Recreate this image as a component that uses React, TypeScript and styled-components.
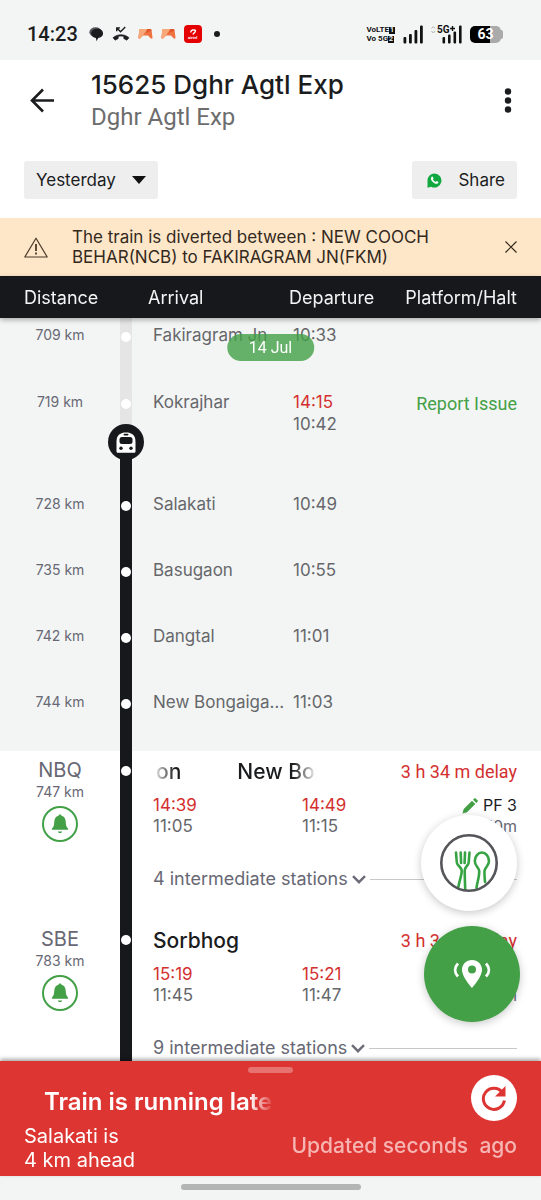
import React from "react";
import styled, { createGlobalStyle } from "styled-components";

const color = {
  ink: "#1b1c1e",
  black: "#17181c",
  surface: "#f3f5f4",
  text: "#66676b",
  slate: "#676874",
  red: "#d32f2f",
  panel: "#dd3532",
  green: "#43a047",
};

const sans = `Inter, Roboto, sans-serif`;
const roboto = `Roboto, "Liberation Sans", sans-serif`;

const GlobalStyle = createGlobalStyle`
  *, *::before, *::after { box-sizing: border-box; }
  body { margin: 0; background: #fff; font-family: ${sans}; color: ${color.ink}; }
  button, select { font: inherit; color: inherit; border: 0; background: none; padding: 0; margin: 0; cursor: pointer; }
  h1, h2, p, ul { margin: 0; padding: 0; font-weight: inherit; list-style: none; }
  svg { display: block; flex: none; }
`;

const Screen = styled.div`
  display: flex;
  flex-direction: column;
  height: 100vh;
  overflow: hidden;
`;

/* ---------- status bar ---------- */

const StatusBar = styled.div`
  display: flex;
  justify-content: space-between;
  align-items: center;
  flex: none;
  height: 60px;
  padding: 8px 38px 0 27px;
  background: ${color.surface};
`;

const StatusGroup = styled.div`
  display: flex;
  align-items: center;
  gap: 8px;
`;

const Clock = styled.time`
  font: 500 20px/24px ${roboto};
  margin-right: 3px;
`;

const Volte = styled.div`
  font: 700 8px/9px ${roboto};
  white-space: nowrap;
  color: #111;
`;

const SimTag = styled.span`
  display: inline-block;
  background: #111;
  color: ${color.surface};
  font-size: 7px;
  line-height: 7px;
  padding: 0 1px;
`;

const AirtelBadge = styled.div`
  display: flex;
  flex-direction: column;
  align-items: center;
  justify-content: center;
  width: 18px;
  height: 18px;
  border-radius: 4px;
  background: #e40000;
  color: #fff;
  font: 700 4px/5px ${roboto};
`;

const Battery = styled.div`
  display: flex;
  align-items: center;
`;

const BatteryBody = styled.div`
  width: 31px;
  height: 17px;
  border-radius: 5px;
  background: linear-gradient(90deg, #000 66%, #aaaaaa 66%);
  color: #fff;
  text-align: center;
  font: 700 14px/17px ${roboto};
`;

const BatteryTip = styled.div`
  width: 2px;
  height: 9px;
  border-radius: 0 2px 2px 0;
  background: #aaaaaa;
`;

/* ---------- header ---------- */

const Header = styled.header`
  display: flex;
  align-items: center;
  flex: none;
  height: 82px;
  padding: 0 28px 0 28px;
`;

const IconButton = styled.button`
  display: flex;
  align-items: center;
  justify-content: center;
  width: 28px;
  height: 40px;
`;

const MenuButton = styled(IconButton)`
  width: 10px;
`;

const Titles = styled.div`
  flex: 1;
  padding-left: 35px;
`;

const Title = styled.h1`
  font: 500 26px/32px ${sans};
`;

const Subtitle = styled.p`
  font: 400 24px/32px ${roboto};
  color: #6d6d6d;
`;

/* ---------- toolbar ---------- */

const Toolbar = styled.div`
  display: flex;
  justify-content: space-between;
  flex: none;
  padding: 19px 24px;
`;

const DayPicker = styled.label`
  display: grid;
  align-items: center;
  background: #eeeeee;
  border-radius: 3px;
  > * { grid-area: 1 / 1; }
  > svg { justify-self: end; margin-right: 12px; pointer-events: none; }
`;

const DaySelect = styled.select`
  appearance: none;
  width: 134px;
  height: 38px;
  padding: 0 12px;
  font-size: 17px;
`;

const ShareButton = styled.button`
  display: flex;
  align-items: center;
  justify-content: space-between;
  width: 105px;
  height: 38px;
  padding: 0 12px 0 15px;
  border-radius: 3px;
  background: #eeeeee;
  font-size: 17px;
`;

/* ---------- alert ---------- */

const Alert = styled.div`
  display: flex;
  align-items: center;
  flex: none;
  padding: 9px 24px;
  background: #fee7c9;
  font-size: 17px;
  line-height: 20px;
  color: #33291c;
  p { flex: 1; padding: 0 24px 0 24px; max-width: 430px; }
  button { margin-left: auto; }
`;

/* ---------- column heads ---------- */

const ColumnHeads = styled.div`
  position: relative;
  z-index: 2;
  display: grid;
  grid-template-columns: 124px 141px 1fr auto;
  flex: none;
  padding: 2px 24px 0;
  background: ${color.black};
  color: #f4f4f4;
  font-size: 18px;
  line-height: 40px;
  box-shadow: 0 2px 5px rgba(0, 0, 0, 0.3);
`;

/* ---------- stops ---------- */

const ListArea = styled.main`
  position: relative;
  flex: 1;
  min-height: 0;
`;

const Scroller = styled.div`
  height: 100%;
  overflow-y: auto;
  scrollbar-width: none;
`;

const PassedList = styled.ul`
  background: ${color.surface};
`;

const StopRow = styled.li<{ $height: number; $top: number }>`
  display: grid;
  grid-template-columns: 120px 12px 161px 1fr auto;
  height: ${(p) => p.$height}px;
  padding-right: 24px;
  font-size: 17px;
  line-height: 22px;
  color: ${color.text};
  > :not([data-track]) { padding-top: ${(p) => p.$top}px; }
`;

const Distance = styled.span`
  text-align: center;
  font-size: 14px;
  color: ${color.slate};
`;

const StopName = styled.span`
  padding-left: 21px;
  padding-right: 6px;
  white-space: nowrap;
  overflow: hidden;
  text-overflow: ellipsis;
  min-width: 0;
`;

const StopTimes = styled.span`
  display: flex;
  flex-direction: column;
`;

const Actual = styled.span`
  color: ${color.red};
`;

const ReportLink = styled.a`
  font: 400 18px/26px ${roboto};
  color: ${color.green};
  text-decoration: none;
`;

const Track = styled.div<{ $done?: boolean; $dot: number }>`
  position: relative;
  padding-top: ${(p) => p.$dot}px;
  background: ${(p) => (p.$done ? "#e5e5e5" : color.black)};
`;

const Dot = styled.div`
  width: 10px;
  height: 10px;
  margin: 0 auto;
  border-radius: 50%;
  background: #fff;
`;

const TrainMarker = styled.div`
  position: absolute;
  left: 50%;
  bottom: 0;
  width: 12px;
  height: 20px;
  background: ${color.black};
  transform: translateX(-50%);
  svg {
    position: absolute;
    left: -12px;
    bottom: 10px;
  }
`;

const DatePill = styled.div`
  position: absolute;
  top: 16px;
  left: 50%;
  transform: translateX(-50%);
  padding: 0 22px;
  border-radius: 14px;
  background: ${color.green};
  opacity: 0.8;
  color: #fff;
  font: 400 16px/27px ${roboto};
`;

const StationRow = styled.li`
  display: grid;
  grid-template-columns: 120px 12px 1fr;
  min-height: 169px;
  background: #fff;
`;

const StationCode = styled.div`
  display: flex;
  flex-direction: column;
  align-items: center;
  padding-top: 8px;
  font-size: 20px;
  line-height: 22px;
  color: ${color.slate};
`;

const BellButton = styled.button`
  display: flex;
  align-items: center;
  justify-content: center;
  width: 36px;
  height: 36px;
  margin-top: 3px;
  border: 2px solid ${color.green};
  border-radius: 50%;
`;

const StationBody = styled.div`
  padding: 8px 24px 0 21px;
  min-width: 0;
`;

const StationHead = styled.div`
  display: flex;
  justify-content: space-between;
  line-height: 26px;
`;

const StationName = styled.h2<{ $scrolling?: boolean }>`
  display: flex;
  gap: 56px;
  width: 164px;
  overflow: hidden;
  white-space: nowrap;
  font-size: 21px;
  font-weight: 500;
  ${(p) =>
    p.$scrolling &&
    `padding-left: 3px;
     mask-image: linear-gradient(90deg, transparent, #000 22px, #000 calc(100% - 24px), transparent);`}
`;

const Delay = styled.span`
  font: 400 18px/26px ${roboto};
  color: ${color.red};
`;

const TimeGrid = styled.div`
  display: grid;
  grid-template-columns: 149px 1fr auto;
  padding-top: 10px;
  font-size: 17px;
  line-height: 21px;
  color: ${color.text};
`;

const Platform = styled.span`
  display: flex;
  align-items: center;
  gap: 5px;
  font-size: 16px;
  color: ${color.ink};
`;

const Halt = styled.span`
  text-align: right;
  font-size: 16px;
  color: ${color.slate};
`;

const Intermediate = styled.button`
  display: flex;
  align-items: center;
  gap: 4px;
  width: 100%;
  margin-top: 31px;
  font-size: 18px;
  line-height: 22px;
  white-space: nowrap;
  color: ${color.slate};
  &::after {
    content: "";
    flex: 1;
    height: 1px;
    background: #c8c8ca;
  }
`;

/* ---------- floating buttons ---------- */

const FloatingActions = styled.div`
  position: absolute;
  right: 21px;
  bottom: 39px;
  display: flex;
  flex-direction: column;
  gap: 15px;
`;

const Fab = styled.button<{ $fill: string; $shift?: number }>`
  display: flex;
  align-items: center;
  justify-content: center;
  width: 96px;
  height: 96px;
  margin-left: -${(p) => p.$shift ?? 0}px;
  border-radius: 50%;
  background: ${(p) => p.$fill};
  box-shadow: 0 2px 8px rgba(0, 0, 0, 0.22);
`;

/* ---------- bottom panel ---------- */

const Panel = styled.section`
  position: relative;
  z-index: 2;
  flex: none;
  padding: 6px 24px 4px;
  background: ${color.panel};
  color: #fff;
  box-shadow: 0 -2px 4px rgba(0, 0, 0, 0.35);
`;

const Handle = styled.div`
  width: 45px;
  height: 6px;
  margin: 0 auto;
  border-radius: 3px;
  background: #e87270;
`;

const PanelBody = styled.div`
  display: flex;
  justify-content: space-between;
`;

const RunningText = styled.h2`
  width: 250px;
  margin-top: 13px;
  padding-left: 20px;
  overflow: hidden;
  white-space: nowrap;
  font-size: 24px;
  font-weight: 600;
  line-height: 32px;
  mask-image: linear-gradient(90deg, #000 calc(100% - 24px), transparent);
`;

const Ahead = styled.p`
  margin-top: 6px;
  font-size: 20px;
  line-height: 24px;
`;

const PanelSide = styled.div`
  display: flex;
  flex-direction: column;
  align-items: flex-end;
  padding-top: 2px;
`;

const RefreshButton = styled.button`
  display: flex;
  align-items: center;
  justify-content: center;
  width: 46px;
  height: 46px;
  border-radius: 50%;
  background: #fff;
`;

const Updated = styled.p`
  margin-top: 12px;
  font-size: 21px;
  font-weight: 500;
  line-height: 26px;
  white-space: pre;
  color: #f6b5b3;
`;

const NavBar = styled.div`
  display: flex;
  justify-content: center;
  flex: none;
  height: 24px;
  padding-top: 8px;
  background: ${color.surface};
  &::after {
    content: "";
    width: 180px;
    height: 6px;
    border-radius: 3px;
    background: #b3b5b4;
  }
`;

/* ---------- icons ---------- */

const ChatIcon = () => (
  <svg width="15" height="16" viewBox="0 0 16 16">
    <ellipse cx="7" cy="6" rx="6.6" ry="5.2" fill="#55575a" />
    <path d="M9 2.4c3.4 0 6 2 6 5 0 2.600-2.200 4.500-5.200 4.900L8 15.600 7.400 12.200C4.500 11.700 2.300 9.900 2.300 7.400c0-3 3-5 6.700-5z" fill="#1b1c1e" />
  </svg>
);

const MissedCallIcon = () => (
  <svg width="18" height="16" viewBox="0 0 19 16" fill="none" stroke="#1b1c1e">
    <path d="M5 1.500l4 4 5-5M5 5V1.500h3.500" strokeWidth="1.500" />
    <path d="M1 12C5.500 7.600 13.500 7.600 18 12l-2.400 2.600-3.200-1.800v-2.200c-1.900-.5-3.900-.5-5.800 0v2.200l-3.200 1.800z" fill="#1b1c1e" strokeWidth="0.600" />
  </svg>
);

const GameIcon = () => (
  <svg width="15" height="12" viewBox="0 0 15 12">
    <path d="M2.500 1h9.500c1 0 1.400.6 1.600 1.600l.9 7c.1 1.300-1.200 1.500-2 .7L10 7.600H5L2.400 10.300c-.8.8-2.100.6-2-.7l.9-7C1.500 1.600 1.500 1 2.500 1z" fill="#ee7340" />
    <path d="M2.500 1h6.800L5 7.600 2.400 10.300c-.8.8-2.100.6-2-.7l.9-7C1.500 1.600 1.500 1 2.500 1z" fill="#f8a878" />
    <path d="M9.300 1H12c1 0 1.400.6 1.600 1.600L8 5z" fill="#e2562c" />
  </svg>
);

const SignalIcon = () => (
  <svg width="20" height="19" viewBox="0 0 20 19" fill="#111">
    <rect x="0.500" y="12" width="2.800" height="6.500" rx="1" />
    <rect x="6" y="9" width="2.800" height="9.500" rx="1" />
    <rect x="11.500" y="5" width="2.800" height="13.500" rx="1" />
    <rect x="17" y="0.500" width="2.800" height="18" rx="1" />
  </svg>
);

const FiveGIcon = () => (
  <svg width="31" height="19" viewBox="0 0 31 19" fill="#111">
    <path d="M0.500 3.500l1.800-2 1.800 2M0.500 6l1.800 2 1.800-2" fill="none" stroke="#b0b2b1" />
    <text x="6" y="8" fontFamily="Roboto, sans-serif" fontWeight="700" fontSize="10">5G</text>
    <path d="M19 3.500h5M21.500 1v5" stroke="#111" strokeWidth="1.400" />
    <rect x="11.500" y="12" width="2.600" height="6.500" rx="1" />
    <rect x="17" y="9.500" width="2.600" height="9" rx="1" />
    <rect x="22.500" y="6.500" width="2.600" height="12" rx="1" />
    <rect x="28" y="0.500" width="2.600" height="18" rx="1" />
  </svg>
);

const BackIcon = () => (
  <svg width="28" height="28" viewBox="0 0 28 28" fill="none" stroke="#1b1c1e" strokeWidth="2.600">
    <path d="M26 13.500H4M15 2.500L4 13.500l11 11" />
  </svg>
);

const DotsIcon = () => (
  <svg width="8" height="26" viewBox="0 0 8 26" fill="#1b1c1e">
    <circle cx="4" cy="3.500" r="3.200" />
    <circle cx="4" cy="12.500" r="3.200" />
    <circle cx="4" cy="21.500" r="3.200" />
  </svg>
);

const CaretIcon = () => (
  <svg width="14" height="8" viewBox="0 0 14 8" fill="#111">
    <path d="M0 0h14L7 8z" />
  </svg>
);

const WhatsappIcon = () => (
  <svg width="15" height="15" viewBox="0 0 15 15">
    <path d="M7.500.5a7 7 0 1 1-3.300 13.200L.5 14.700V7.500A7 7 0 0 1 7.500.5z" fill="#10a83f" />
    <path d="M4.600 3.800c.5-.6 1-.5 1.300.1l.6 1.300c.1.500-.5.800-.5 1.200.5 1 1.400 1.900 2.500 2.300.5 0 .8-.9 1.200-.8l1.500.8c.5.300.1 1.700-.9 2C7.600 11.500 3.200 7.300 4 4.900z" fill="#fff" />
  </svg>
);

const WarningIcon = () => (
  <svg width="24" height="21" viewBox="0 0 24 21" fill="none" stroke="#4a3b26">
    <path d="M12 1.200L23.200 20H.8z" strokeLinejoin="round" strokeWidth="1.200" />
    <path d="M12 7v7M12 15.500v2" strokeWidth="1.800" />
  </svg>
);

const CloseIcon = () => (
  <svg width="12" height="12" viewBox="0 0 12 12" stroke="#33291c" strokeWidth="1.200">
    <path d="M.5.5l11 11M11.500.5l-11 11" />
  </svg>
);

const TrainIcon = () => (
  <svg width="36" height="36" viewBox="0 0 36 36">
    <circle cx="18" cy="18" r="18" fill="#17181c" />
    <path d="M18 8.500c5.500 0 9.500 2.500 9.500 9v9.700c0 1-.6 1.600-1.600 1.600H10.100c-1 0-1.600-.6-1.600-1.600V17.500c0-6.500 4-9 9.500-9z" fill="#fff" />
    <rect x="15.500" y="9.800" width="5" height="1.600" rx="0.800" fill="#17181c" />
    <rect x="11.500" y="13" width="13" height="7" rx="2.500" fill="#17181c" />
    <circle cx="13" cy="24.300" r="1.700" fill="#17181c" />
    <circle cx="23" cy="24.300" r="1.700" fill="#17181c" />
  </svg>
);

const BellIcon = () => (
  <svg width="18" height="20" viewBox="0 0 18 20" fill="#43a047">
    <path d="M9 .5c.8 0 1.400.5 1.500 1.300C13.300 2.500 14.500 4.600 14.700 7.500c.2 3.300.4 5.200 2.300 7 .5.500.3 1.200-.4 1.200H1.400c-.7 0-.9-.7-.4-1.200 1.900-1.800 2.100-3.700 2.300-7C3.500 4.600 4.700 2.500 7.500 1.800 7.600 1 8.200.5 9 .5z" />
    <path d="M6.800 17.500h4.400c-.3 1-1.200 1.500-2.200 1.500s-1.900-.5-2.200-1.500z" />
  </svg>
);

const PencilIcon = () => (
  <svg width="16" height="16" viewBox="0 0 16 16" fill="#43a047">
    <path d="M.5 15.500l1.200-4.500L10 2.700 13.300 6 5 14.300zM11 1.700l1.200-1.200c.5-.5 1.100-.4 1.500 0l1.800 1.800c.4.400.5 1 0 1.500L14.300 5z" />
  </svg>
);

const ChevronIcon = () => (
  <svg width="14" height="9" viewBox="0 0 14 9" fill="none" stroke="#6c6d78" strokeWidth="2.400">
    <path d="M1 1.200l6 6 6-6" />
  </svg>
);

const FoodIcon = () => (
  <svg width="58" height="58" viewBox="0 0 58 58" fill="none">
    <g stroke="#37a443" strokeWidth="2.600" strokeLinecap="round" strokeLinejoin="round">
      <path d="M16 18.500l.8 10c.3 3.200 4.700 4.500 4.900 8 .3 5-2.800 11-3.400 17" />
      <path d="M29.500 18.500l-.8 10c-.3 3.200-4 4.500-4 8 0 5 .3 12 .5 19" />
      <path d="M20.700 18.500l.4 10.500M25 18.500l-.4 10.500" />
      <path d="M36.500 54c.6-6 3-11 2.700-17-.3-3.500-4.400-5-4.400-10 0-4.500 3.200-8.500 7.100-8.500s7.100 4 7.100 8.500c0 5-4.200 6.500-4.500 10-.3 4 .3 7.500.5 11" />
    </g>
    <circle cx="29" cy="29" r="27.700" stroke="#55565a" strokeWidth="2.600" />
  </svg>
);

const LocateIcon = () => (
  <svg width="38" height="30" viewBox="0 0 38 30" fill="none">
    <path d="M19 1C13.300 1 9 5.300 9 10.800 9 18 19 29 19 29s10-11 10-18.200C29 5.300 24.700 1 19 1zm0 13.600a4 4 0 1 1 0-8 4 4 0 0 1 0 8z" fill="#fff" />
    <path d="M5 4.500C1.200 8.500 1.200 13.500 5 17.500M33 4.500c3.800 4 3.800 9 0 13" stroke="#fff" strokeWidth="2.800" />
  </svg>
);

const RefreshIcon = () => (
  <svg width="26" height="26" viewBox="0 0 26 26" fill="none">
    <path d="M21.500 7.500A10.600 10.600 0 1 0 23.400 15.500" stroke="#dd3532" strokeWidth="3" />
    <path d="M24.500 1v10.500H14z" fill="#dd3532" />
  </svg>
);

/* ---------- data ---------- */

type Stop = {
  km: number;
  name: string;
  time: string;
  actual?: string;
  done?: boolean;
  height: number;
  top: number;
  train?: boolean;
};

const stops: Stop[] = [
  { km: 709, name: "Fakiragram Jn", time: "10:33", done: true, height: 50, top: 6 },
  { km: 719, name: "Kokrajhar", time: "10:42", actual: "14:15", done: true, height: 102, top: 23, train: true },
  { km: 728, name: "Salakati", time: "10:49", height: 66, top: 23 },
  { km: 735, name: "Basugaon", time: "10:55", height: 66, top: 23 },
  { km: 742, name: "Dangtal", time: "11:01", height: 66, top: 23 },
  { km: 744, name: "New Bongaigaon Jn", time: "11:03", height: 83, top: 23 },
];

const stations = [
  { code: "NBQ", km: 747, name: ["on", "New Bongaigaon"], arr: "14:39", sArr: "11:05", dep: "14:49", sDep: "11:15", pf: "PF 3", halt: "10m", between: 4 },
  { code: "SBE", km: 783, name: ["Sorbhog"], arr: "15:19", sArr: "11:45", dep: "15:21", sDep: "11:47", pf: "PF 1", halt: "2m", between: 9 },
];

export default function App() {
  return (
    <Screen>
      <GlobalStyle />
      <StatusBar>
        <StatusGroup>
          <Clock>14:23</Clock>
          <ChatIcon />
          <MissedCallIcon />
          <GameIcon />
          <GameIcon />
          <AirtelBadge>
            <svg width="8" height="6" viewBox="0 0 8 6" fill="none" stroke="#fff" strokeWidth="1.400">
              <path d="M2 3.500C1 1 6 0 6.500 1.800 6.800 3.200 4.500 4 4 5.500" />
            </svg>
            airtel
          </AirtelBadge>
          <svg width="12" height="6" viewBox="0 0 12 6">
            <circle cx="7" cy="3" r="3" fill="#1b1c1e" />
          </svg>
        </StatusGroup>
        <StatusGroup>
          <Volte>
            <div>VoLTE<SimTag>1</SimTag></div>
            <div>Vo 5G<SimTag>2</SimTag></div>
          </Volte>
          <SignalIcon />
          <FiveGIcon />
          <Battery>
            <BatteryBody>63</BatteryBody>
            <BatteryTip />
          </Battery>
        </StatusGroup>
      </StatusBar>

      <Header>
        <IconButton aria-label="Back"><BackIcon /></IconButton>
        <Titles>
          <Title>15625 Dghr Agtl Exp</Title>
          <Subtitle>Dghr Agtl Exp</Subtitle>
        </Titles>
        <MenuButton aria-label="More options"><DotsIcon /></MenuButton>
      </Header>

      <Toolbar>
        <DayPicker>
          <DaySelect aria-label="Journey day" defaultValue="Yesterday">
            <option>Yesterday</option>
          </DaySelect>
          <CaretIcon />
        </DayPicker>
        <ShareButton>
          <WhatsappIcon />
          Share
        </ShareButton>
      </Toolbar>

      <Alert role="alert">
        <WarningIcon />
        <p>The train is diverted between : NEW COOCH BEHAR(NCB) to FAKIRAGRAM JN(FKM)</p>
        <button aria-label="Dismiss"><CloseIcon /></button>
      </Alert>

      <ColumnHeads>
        <span>Distance</span>
        <span>Arrival</span>
        <span>Departure</span>
        <span>Platform/Halt</span>
      </ColumnHeads>

      <ListArea>
        <Scroller>
          <PassedList>
            {stops.map((s) => (
              <StopRow key={s.km} $height={s.height} $top={s.top}>
                <Distance>{s.km} km</Distance>
                <Track data-track $done={s.done} $dot={s.top + 8}>
                  <Dot />
                  {s.train && <TrainMarker><TrainIcon /></TrainMarker>}
                </Track>
                <StopName>{s.name}</StopName>
                <StopTimes>
                  {s.actual && <Actual>{s.actual}</Actual>}
                  <span>{s.time}</span>
                </StopTimes>
                {s.actual && <ReportLink href="#report">Report Issue</ReportLink>}
              </StopRow>
            ))}
          </PassedList>
          <ul>
            {stations.map((s) => (
              <StationRow key={s.code}>
                <StationCode>
                  {s.code}
                  <Distance>{s.km} km</Distance>
                  <BellButton aria-label={`Set alarm for ${s.code}`}><BellIcon /></BellButton>
                </StationCode>
                <Track $dot={15}><Dot /></Track>
                <StationBody>
                  <StationHead>
                    <StationName $scrolling={s.name.length > 1}>
                      {s.name.map((part) => <span key={part}>{part}</span>)}
                    </StationName>
                    <Delay>3 h 34 m delay</Delay>
                  </StationHead>
                  <TimeGrid>
                    <Actual>{s.arr}</Actual>
                    <Actual>{s.dep}</Actual>
                    <Platform><PencilIcon />{s.pf}</Platform>
                    <span>{s.sArr}</span>
                    <span>{s.sDep}</span>
                    <Halt>{s.halt}</Halt>
                  </TimeGrid>
                  <Intermediate>
                    {s.between} intermediate stations
                    <ChevronIcon />
                  </Intermediate>
                </StationBody>
              </StationRow>
            ))}
          </ul>
        </Scroller>
        <DatePill>14 Jul</DatePill>
        <FloatingActions>
          <Fab $fill="#fff" $shift={3} aria-label="Order food"><FoodIcon /></Fab>
          <Fab $fill={color.green} aria-label="Use my location"><LocateIcon /></Fab>
        </FloatingActions>
      </ListArea>

      <Panel>
        <Handle />
        <PanelBody>
          <div>
            <RunningText>Train is running late by 3 h 33 m</RunningText>
            <Ahead>Salakati is<br />4 km ahead</Ahead>
          </div>
          <PanelSide>
            <RefreshButton aria-label="Refresh"><RefreshIcon /></RefreshButton>
            <Updated>Updated seconds  ago</Updated>
          </PanelSide>
        </PanelBody>
      </Panel>
      <NavBar />
    </Screen>
  );
}
